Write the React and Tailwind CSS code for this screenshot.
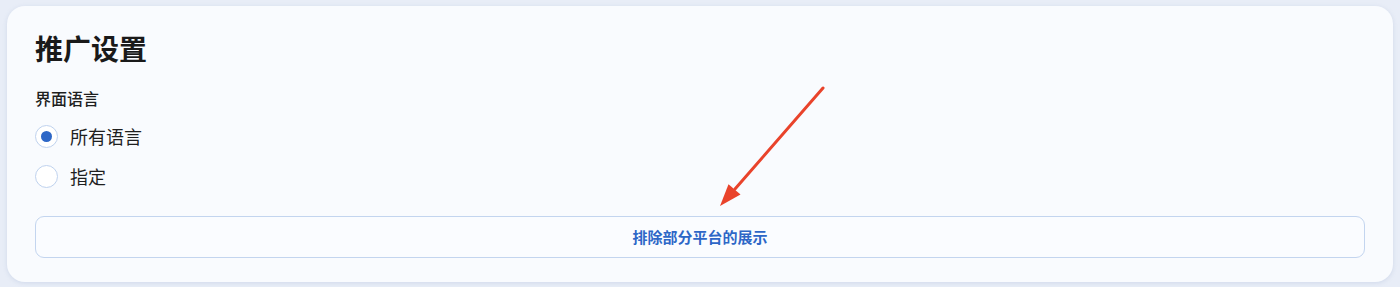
import { useState } from 'react';

const FONT = { fontFamily: '"Noto Sans CJK SC", "Noto Sans", "Liberation Sans", sans-serif' };

function Radio({ checked, label, onClick }) {
  return (
    <button onClick={onClick} className="flex items-center h-[28px] gap-[12px] text-left">
      <span className="w-[23px] h-[23px] rounded-full border border-[#bfd2ee] bg-white flex items-center justify-center">
        {checked && <span className="w-[11px] h-[11px] rounded-full bg-[#2d67c7]" />}
      </span>
      <span className="text-[18px] text-[#1f1f1f] leading-[28px]">{label}</span>
    </button>
  );
}

export default function App() {
  const [mode, setMode] = useState('all');

  return (
    <div className="relative w-[1400px] h-[287px] bg-[#e8edf7] pt-[6px] px-[7px]" style={FONT}>
      {/* Card */}
      <div className="h-[276px] rounded-[18px] bg-[#f9fbfe] shadow-[0_1px_4px_rgba(140,160,200,0.25)] pt-[25px] px-[28px] flex flex-col">
        <h1 className="text-[28px] font-bold leading-[34px] text-[#1a1a1a]">推广设置</h1>
        <p className="mt-[23px] text-[16px] font-medium leading-[21px] text-[#1f1f1f]">界面语言</p>
        <div className="mt-[13px] flex flex-col gap-[12px]">
          <Radio checked={mode === 'all'} label="所有语言" onClick={() => setMode('all')} />
          <Radio checked={mode === 'custom'} label="指定" onClick={() => setMode('custom')} />
        </div>
        <button className="mt-[26px] h-[42px] w-full rounded-[9px] border border-[#c3d5ef] bg-[#fafcff] text-[15px] font-bold text-[#2d67c7]">
          排除部分平台的展示
        </button>
      </div>

      {/* Annotation arrow */}
      <svg className="absolute inset-0 pointer-events-none" width="1400" height="287" viewBox="0 0 1400 287">
        <line x1="823" y1="88" x2="735" y2="189" stroke="#e9432b" strokeWidth="3" strokeLinecap="round" />
        <polygon points="720,206 728.5,184.2 740.5,194.6" fill="#e9432b" />
      </svg>
    </div>
  );
}
